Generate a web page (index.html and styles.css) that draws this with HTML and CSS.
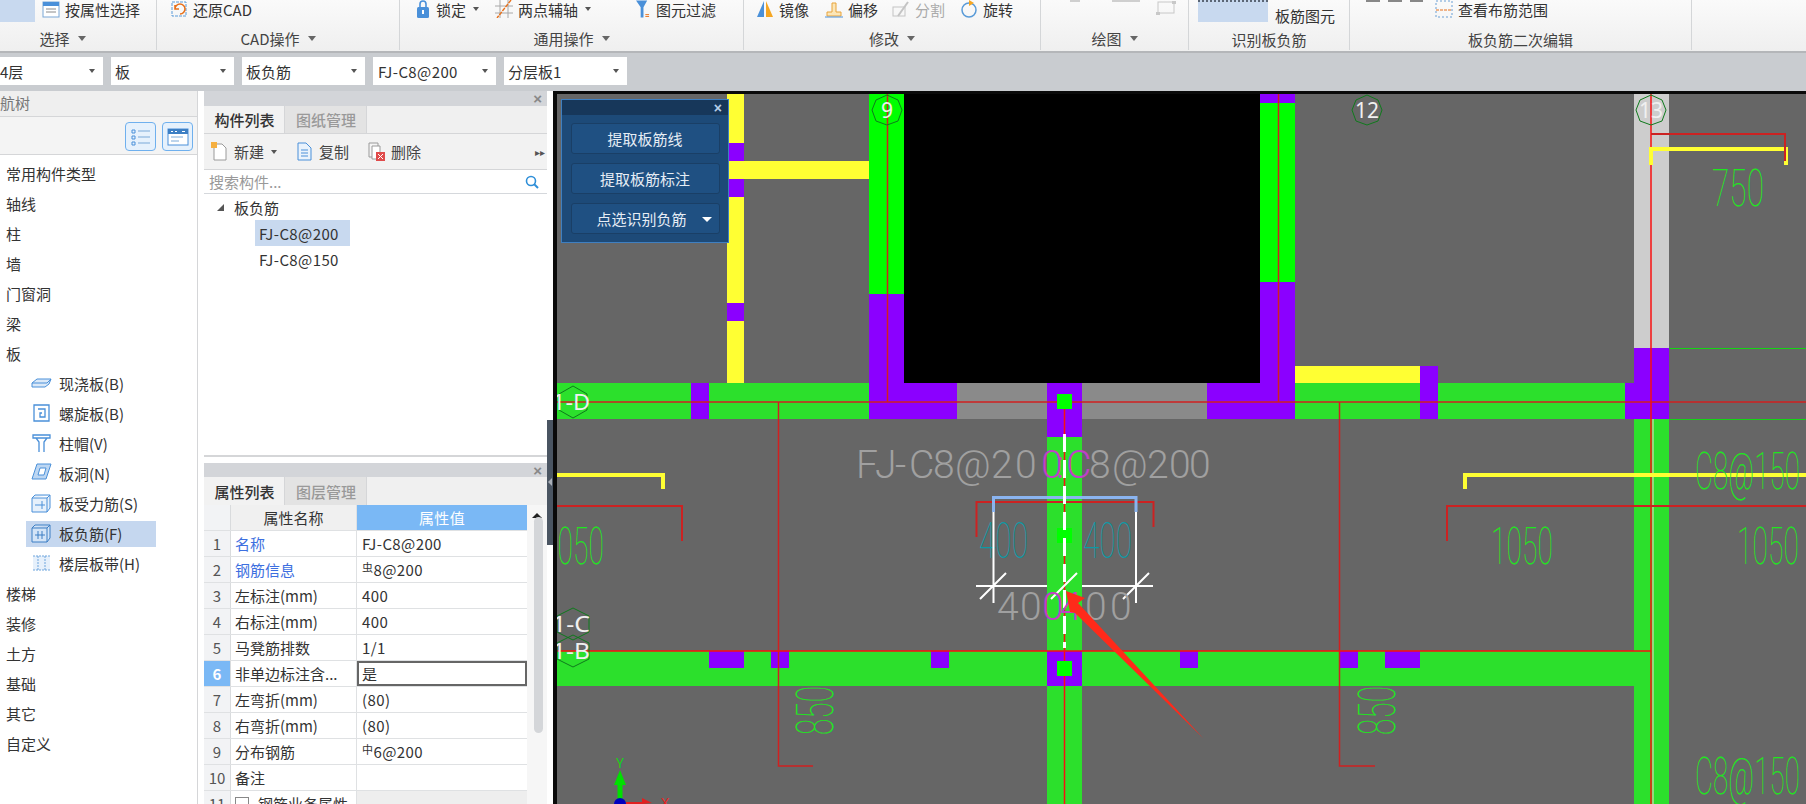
FILE: index.html
```html
<!DOCTYPE html>
<html lang="zh-CN">
<head>
<meta charset="utf-8">
<title>板负筋</title>
<link rel="stylesheet" href="styles.css">
</head>
<body>
<div class="app">
  <header class="ribbon">
    <section class="rg g1">
      <div class="rtop"><span class="hl"></span>
        <span class="ri"><svg class="ic" viewBox="0 0 18 18"><rect x="1" y="2" width="16" height="15" fill="#fff" stroke="#7ba7d6"/><rect x="1" y="2" width="16" height="4" fill="#4a90d9"/><path d="M4 9h10M4 12h10" stroke="#8a8a8a"/></svg>按属性选择</span>
      </div>
      <div class="rlabel">选择<i class="tri"></i></div>
    </section>
    <section class="rg g2">
      <div class="rtop">
        <span class="ri"><svg class="ic" viewBox="0 0 18 18"><rect x="2" y="2" width="14" height="14" fill="none" stroke="#5a9bd8" stroke-dasharray="3 1"/><path d="M5 9a5 5 0 1 1 5 5M5 5v4h4" fill="none" stroke="#e8701a" stroke-width="1.6"/></svg>还原CAD</span>
      </div>
      <div class="rlabel">CAD操作<i class="tri"></i></div>
    </section>
    <section class="rg g3">
      <div class="rtop">
        <span class="ri w79"><svg class="ic ic-n" viewBox="0 0 14 18"><path d="M4 8V4a3 3 0 0 1 6 0v4" fill="none" stroke="#4a90d9" stroke-width="1.6"/><rect x="1" y="7" width="12" height="11" rx="1.500" fill="#4a90d9"/><rect x="6" y="10" width="2" height="4" fill="#fff"/></svg>锁定<i class="tri tri-s"></i></span>
        <span class="ri w141"><svg class="ic" viewBox="0 0 18 18"><path d="M0 6h18M0 13h18M5 0v18M13 0v18" stroke="#a8a8a8"/><path d="M16 0L2 18" stroke="#e8701a" stroke-width="1.4" stroke-dasharray="4 1"/></svg>两点辅轴<i class="tri tri-s"></i></span>
        <span class="ri"><svg class="ic ic-n" viewBox="0 0 15 18"><path d="M0 0h12L8 7v11H5V7z" fill="#4a90d9"/><path d="M10 15h4M10 17h4" stroke="#e8701a"/></svg>图元过滤</span>
      </div>
      <div class="rlabel">通用操作<i class="tri"></i></div>
    </section>
    <section class="rg g4">
      <div class="rtop">
        <span class="ri w69"><svg class="ic" viewBox="0 0 18 18"><path d="M8 1v16H1z" fill="#4a90d9"/><path d="M10 1v16h7z" fill="#f5a623"/></svg>镜像</span>
        <span class="ri w65"><svg class="ic" viewBox="0 0 18 18"><path d="M2 16h14v-4H11V3H7v9H2z" fill="#fbe6b8" stroke="#e8a33a"/><path d="M0 17h18" stroke="#4a90d9"/></svg>偏移</span>
        <span class="ri w70 off"><svg class="ic ic-w" viewBox="0 0 22 18"><rect x="3" y="7" width="12" height="9" fill="none" stroke="#c4c4c4"/><path d="M8 16L18 2" stroke="#c4c4c4" stroke-width="2"/></svg>分割</span>
        <span class="ri"><svg class="ic" viewBox="0 0 18 18"><circle cx="9" cy="10" r="7" fill="none" stroke="#5a9bd8" stroke-width="1.5"/><path d="M9 0l5 3-5 3z" fill="#f5a623"/></svg>旋转</span>
      </div>
      <div class="rlabel">修改<i class="tri"></i></div>
    </section>
    <section class="rg g5">
      <div class="rtop"><span class="gbit b1"></span><span class="gbit b2"></span><svg class="ic rect" viewBox="0 0 20 14"><rect x="2" y="1" width="16" height="11" fill="none" stroke="#c8c8c8"/><path d="M0 11h4v3H0zM16 0h4v3h-4z" fill="#c8c8c8"/></svg></div>
      <div class="rlabel">绘图<i class="tri"></i></div>
    </section>
    <section class="rg g6">
      <div class="rtop"><span class="hl hl6"></span><span class="t2">板筋图元</span></div>
      <div class="rlabel lb2">识别板负筋</div>
    </section>
    <section class="rg g7">
      <div class="rtop"><span class="gbit b3"></span>
        <span class="ri"><svg class="ic" viewBox="0 0 18 18"><rect x="1" y="1" width="16" height="16" fill="none" stroke="#6b9fd4" stroke-dasharray="2 2"/><path d="M1 10h16" stroke="#e8701a" stroke-dasharray="3 1"/></svg>查看布筋范围</span>
      </div>
      <div class="rlabel lb2">板负筋二次编辑</div>
    </section>
  </header>

  <nav class="bar">
    <div class="dd d1"><span class="dd-t d1-t">4层</span><i class="tri tri-s"></i></div>
    <div class="dd"><span class="dd-t">板</span><i class="tri tri-s"></i></div>
    <div class="dd"><span class="dd-t">板负筋</span><i class="tri tri-s"></i></div>
    <div class="dd"><span class="dd-t ltn">FJ-C8@200</span><i class="tri tri-s"></i></div>
    <div class="dd"><span class="dd-t">分层板1</span><i class="tri tri-s"></i></div>
  </nav>

  <main class="main">
    <aside class="nav">
      <div class="nav-h"><span>导航树</span></div>
      <div class="nav-tools">
        <button class="tb"><svg viewBox="0 0 22 20" class="tb-i"><path d="M2 3h3v3H2zM2 9h3v3H2zM2 15h3v3H2z" fill="none" stroke="#4a90d9"/><path d="M8 4h12M8 10h12M8 16h12" stroke="#7aa9d8"/></svg></button>
        <button class="tb"><svg viewBox="0 0 22 20" class="tb-i"><rect x="1" y="2" width="20" height="16" fill="#fff" stroke="#4a90d9"/><rect x="1" y="2" width="20" height="5" fill="#3d7fc4"/><path d="M4 4.500h2M8 4.500h2M15 4.500h3" stroke="#fff"/><path d="M4 10h12M4 14h8" stroke="#7aa9d8"/></svg></button>
      </div>
      <ul class="tree">
        <li>常用构件类型</li>
        <li>轴线</li>
        <li>柱</li>
        <li>墙</li>
        <li>门窗洞</li>
        <li>梁</li>
        <li>板</li>
        <li class="sub"><svg class="si" viewBox="0 0 21 20"><path d="M1 10l5-4h14l-2 5-4 3H1z" fill="#dbe9f8" stroke="#4a90d9"/><path d="M1 10h15l4-4" fill="none" stroke="#4a90d9"/></svg>现浇板(B)</li>
        <li class="sub"><svg class="si" viewBox="0 0 21 20"><path d="M3 2h15v16H3zM7 6h7v8H9v-4h2" fill="none" stroke="#4a90d9" stroke-width="1.3"/></svg>螺旋板(B)</li>
        <li class="sub"><svg class="si" viewBox="0 0 21 20"><path d="M2 2h17v3H2zM5 5l3 4v10M16 5l-3 4v10" fill="none" stroke="#4a90d9" stroke-width="1.3"/></svg>柱帽(V)</li>
        <li class="sub"><svg class="si" viewBox="0 0 21 20"><path d="M6 1h14l-5 15H1z" fill="#bcd6f2" stroke="#4a90d9"/><path d="M9 5h6l-2 7H7z" fill="#fff" stroke="#4a90d9"/></svg>板洞(N)</li>
        <li class="sub"><svg class="si" viewBox="0 0 21 20"><path d="M1 5h15v14H1zM16 5l3-3v13l-3 4M1 5l3-3h15" fill="#e6f0fb" stroke="#4a90d9"/><path d="M4 12h10M11 8v8" stroke="#4a90d9"/></svg>板受力筋(S)</li>
        <li class="sub cur"><svg class="si" viewBox="0 0 21 20"><path d="M1 5h15v14H1zM16 5l3-3v13l-3 4M1 5l3-3h15" fill="#d3e4f7" stroke="#3d7fc4"/><path d="M4 12h10M7 8v8M11 8v8" stroke="#3d7fc4"/></svg>板负筋(F)</li>
        <li class="sub"><svg class="si" viewBox="0 0 21 20"><path d="M2 3h17v14H2z" fill="#e6f0fb"/><path d="M2 3h17M2 17h17M7 3v14M14 3v14" stroke="#6fa5dd" stroke-dasharray="2 1"/></svg>楼层板带(H)</li>
        <li>楼梯</li>
        <li>装修</li>
        <li>土方</li>
        <li>基础</li>
        <li>其它</li>
        <li>自定义</li>
      </ul>
    </aside>

    <div class="mid">
      <section class="panel p-list">
        <div class="ptitle"><span class="x">×</span></div>
        <div class="tabs"><span class="tab on">构件列表</span><span class="tab">图纸管理</span></div>
        <div class="ptools">
          <span class="pt w85"><svg class="pi" viewBox="0 0 17 19"><path d="M3 2h8l4 4v12H3z" fill="#fff" stroke="#9a9a9a"/><path d="M0 0h6v6H0z" fill="#f5b041"/></svg>新建<i class="tri tri-s"></i></span>
          <span class="pt w72"><svg class="pi" viewBox="0 0 17 19"><path d="M2 1h8l5 5v12H2z" fill="#eaf3fc" stroke="#4a90d9"/><path d="M5 8h7M5 11h7M5 14h7" stroke="#4a90d9"/></svg>复制</span>
          <span class="pt"><svg class="pi" viewBox="0 0 17 19"><path d="M1 1h9v14H1z" fill="#f5f5f5" stroke="#9a9a9a"/><path d="M4 4h8v13H4z" fill="#fff" stroke="#9a9a9a"/><rect x="8" y="10" width="9" height="9" fill="#e04b4b"/><path d="M10 12l5 5M15 12l-5 5" stroke="#fff"/></svg>删除</span>
          <span class="more">▸▸</span>
        </div>
        <div class="search"><span>搜索构件...</span><svg class="mag" viewBox="0 0 14 14"><circle cx="6" cy="6" r="4.5" fill="none" stroke="#2f8fd8" stroke-width="1.6"/><path d="M9 9l4 4" stroke="#2f8fd8" stroke-width="2"/></svg></div>
        <div class="lst">
          <div class="l0"><i class="corner"></i>板负筋</div>
          <div class="l1 sel">FJ-C8@200</div>
          <div class="l1">FJ-C8@150</div>
        </div>
      </section>
      <section class="panel p-prop">
        <div class="ptitle"><span class="x">×</span></div>
        <div class="tabs"><span class="tab on">属性列表</span><span class="tab">图层管理</span></div>
        <div class="pbody">
          <div class="grid">
            <div class="r hd"><span class="n"></span><span class="k">属性名称</span><span class="v">属性值</span></div>
            <div class="r"><span class="n">1</span><span class="k blue">名称</span><span class="v">FJ-C8@200</span></div>
            <div class="r"><span class="n">2</span><span class="k blue">钢筋信息</span><span class="v"><small>虫</small>8@200</span></div>
            <div class="r"><span class="n">3</span><span class="k">左标注(mm)</span><span class="v">400</span></div>
            <div class="r"><span class="n">4</span><span class="k">右标注(mm)</span><span class="v">400</span></div>
            <div class="r"><span class="n">5</span><span class="k">马凳筋排数</span><span class="v">1/1</span></div>
            <div class="r act"><span class="n">6</span><span class="k">非单边标注含...</span><span class="v">是</span></div>
            <div class="r"><span class="n">7</span><span class="k">左弯折(mm)</span><span class="v">(80)</span></div>
            <div class="r"><span class="n">8</span><span class="k">右弯折(mm)</span><span class="v">(80)</span></div>
            <div class="r"><span class="n">9</span><span class="k">分布钢筋</span><span class="v"><small>中</small>6@200</span></div>
            <div class="r"><span class="n">10</span><span class="k">备注</span><span class="v"></span></div>
            <div class="r r11"><span class="n">11</span><span class="k"><i class="chk"></i>钢筋业务属性</span><span class="v"></span></div>
          </div>
          <div class="sb"><i class="sb-up"></i><i class="sb-th"></i></div>
        </div>
      </section>
    </div>

    <div class="split"><i class="split-d"></i></div>

    <div class="canvas">
      <svg class="cad" viewBox="557 94 1249 710" width="1249" height="710">
        <!-- upper yellow wall -->
        <rect class="y" x="727" y="94" width="17" height="289"/>
        <rect class="p" x="727" y="143" width="17" height="18"/>
        <rect class="p" x="727" y="179" width="17" height="18"/>
        <rect class="p" x="727" y="303" width="17" height="18"/>
        <rect class="y" x="727" y="161" width="142" height="18"/>
        <!-- black block -->
        <rect class="k0" x="904" y="94" width="356" height="289"/>
        <!-- green walls -->
        <rect class="g0" x="869" y="94" width="35" height="200"/>
        <rect class="p" x="869" y="294" width="35" height="125"/>
        <rect class="p" x="1260" y="94" width="35" height="9"/>
        <rect class="g0" x="1260" y="103" width="35" height="179"/>
        <rect class="p" x="1260" y="282" width="35" height="137"/>
        <rect class="c0" x="1634" y="94" width="35" height="254"/>
        <!-- band D -->
        <rect class="g" x="557" y="383" width="312" height="36"/>
        <rect class="p" x="691" y="383" width="18" height="36"/>
        <rect class="p" x="869" y="383" width="88" height="36"/>
        <rect class="m" x="957" y="383" width="90" height="36"/>
        <rect class="m" x="1082" y="383" width="125" height="36"/>
        <rect class="p" x="1207" y="383" width="88" height="36"/>
        <rect class="y" x="1295" y="366" width="125" height="17"/>
        <rect class="g" x="1295" y="383" width="330" height="36"/>
        <rect class="p" x="1420" y="366" width="18" height="53"/>
        <rect class="p" x="1625" y="383" width="9" height="36"/>
        <rect class="p" x="1634" y="348" width="35" height="71"/>
        <!-- verticals -->
        <rect class="g" x="1634" y="419" width="35" height="385"/>
        <rect class="g" x="1047" y="437" width="35" height="367"/>
        <rect class="p" x="1047" y="383" width="35" height="54"/>
        <!-- band B -->
        <rect class="g" x="557" y="651" width="1077" height="35"/>
        <rect class="p" x="709" y="651" width="35" height="17"/>
        <rect class="p" x="771" y="651" width="18" height="17"/>
        <rect class="p" x="931" y="651" width="18" height="17"/>
        <rect class="p" x="1180" y="651" width="18" height="17"/>
        <rect class="p" x="1339" y="651" width="19" height="17"/>
        <rect class="p" x="1385" y="651" width="35" height="17"/>
        <rect class="p" x="1047" y="651" width="35" height="35"/>

        <!-- thin green -->
        <path class="lg" d="M1669 348.500H1806M1669 419.500H1806"/>
        <!-- red axes -->
        <path class="lr" d="M557 402H1806M887.500 94V402M1278.500 94V402M778.500 402V766H813M1339.500 402V766H1375"/>
        <path class="lr2" d="M557 651H1651M1064.500 402V804M1651 94V804"/>
        <path class="lw1" d="M1653 419V804"/>
        <!-- rebar brackets -->
        <path class="ly" d="M557 475H663V489M1465 489V475H1806M1651 165V149H1786V165"/>
        <path class="lr3" d="M557 506H682V541M1447 541V506H1806M1651 134H1785V161M976.500 537V502H1153.500V527"/>

        <!-- column markers -->
        <rect class="g0" x="1057" y="394" width="15" height="15"/>
        <rect class="g0" x="1057" y="661" width="15" height="15"/>
        <rect class="g0" x="1057" y="528" width="15" height="15"/>

        <!-- CAD text -->
        <text class="t-g" x="542" y="564" textLength="62" lengthAdjust="spacingAndGlyphs">1050</text>
        <text class="t-g" x="1491" y="564" textLength="62" lengthAdjust="spacingAndGlyphs">1050</text>
        <text class="t-g" x="1737" y="564" textLength="62" lengthAdjust="spacingAndGlyphs">1050</text>
        <text class="t-g" x="1712" y="206" textLength="52" lengthAdjust="spacingAndGlyphs">750</text>
        <text class="t-g" x="1695" y="489" textLength="105" lengthAdjust="spacingAndGlyphs">C8@150</text>
        <text class="t-g" x="1695" y="794" textLength="105" lengthAdjust="spacingAndGlyphs">C8@150</text>
        <text class="t-g" transform="translate(833 735) rotate(-90)" textLength="49" lengthAdjust="spacingAndGlyphs">850</text>
        <text class="t-g" transform="translate(1395 735) rotate(-90)" textLength="49" lengthAdjust="spacingAndGlyphs">850</text>
        <text class="t-c" x="979" y="558" textLength="49" lengthAdjust="spacingAndGlyphs">400</text>
        <text class="t-c" x="1083" y="558" textLength="49" lengthAdjust="spacingAndGlyphs">400</text>

        <!-- selected rebar -->
        <path class="lw" d="M993.500 512V603M1136 512V603M976 586H1047M1082 586H1153M980 599L1006 573M1051 599L1077 573M1123 599L1149 573"/>
        <path class="lb" d="M993.500 512V497.500H1136V512"/>
        <path class="ld" d="M1064.500 434V648"/>
        <text class="t-a" y="478" x="856 875 895 909 933 955 991 1015">FJ-C8@20<tspan class="mg" x="1041 1056 1066">0:C</tspan><tspan x="1089 1112 1147 1169 1189">8@200</tspan></text>
        <text class="t-a" y="620" x="997 1020">40<tspan class="mg" x="1042 1060">04</tspan><tspan x="1085 1110">00</tspan></text>

        <!-- arrow -->
        <polygon class="ar" points="1066,591 1085,598 1078,603 1203,738 1075,613 1070,612"/>

        <!-- axis bubbles -->
        <g class="bub">
          <polygon points="887,95 898,100 902,110 898,121 887,125 876,121 872,110 876,100"/>
          <polygon points="1367,95 1378,100 1382,110 1378,121 1367,125 1356,121 1352,110 1356,100"/>
          <polygon points="1651,95 1662,100 1666,110 1662,121 1651,125 1640,121 1636,110 1640,100"/>
          <polygon points="573,386 587,394 587,410 573,418 559,410 559,394"/>
          <polygon points="573,608 589,616 589,632 573,640 557,632 557,616"/>
          <polygon points="573,635 589,643 589,659 573,667 557,659 557,643"/>
        </g>
        <text class="t-b" x="887" y="118" text-anchor="middle">9</text>
        <text class="t-b" x="1367" y="118" text-anchor="middle">12</text>
        <text class="t-b" x="1651" y="118" text-anchor="middle">13</text>
        <text class="t-b" x="552" y="410" textLength="38" lengthAdjust="spacingAndGlyphs">1-D</text>
        <text class="t-b" x="552" y="632" textLength="38" lengthAdjust="spacingAndGlyphs">1-C</text>
        <text class="t-b" x="552" y="659" textLength="38" lengthAdjust="spacingAndGlyphs">1-B</text>

        <!-- UCS -->
        <path class="ux" d="M620 804V785"/>
        <polygon class="uy" points="620,770 626,785 614,785"/>
        <text class="t-y" x="620" y="768" text-anchor="middle">Y</text>
        <circle class="uz" cx="620" cy="804" r="6"/>
        <path class="ur" d="M626 803H642"/>
        <polygon class="urf" points="652,803 642,798 642,804"/>
        <text class="t-x" x="665" y="808" text-anchor="middle">X</text>
      </svg>
      <div class="float">
        <div class="float-h"><span>×</span></div>
        <button class="fb">提取板筋线</button>
        <button class="fb">提取板筋标注</button>
        <button class="fb fb-d">点选识别负筋<i class="fb-t"></i></button>
      </div>
    </div>
  </main>
</div>
</body>
</html>
```

FILE: styles.css
```css
* { box-sizing: border-box; }
html, body { margin: 0; height: 100%; background: #fff; overflow: hidden; }
body { font: 15px/1 "Noto Sans CJK SC", "Noto Sans", sans-serif; color: #333; }
ul { list-style: none; margin: 0; padding: 0; }
i { font-style: normal; display: inline-block; }
button { font: inherit; }

.app { width: 1806px; height: 804px; display: flex; flex-direction: column; overflow: hidden; }

/* ribbon */
.ribbon { height: 53px; flex: none; display: flex; background: linear-gradient(#fafafa, #efefef); border-bottom: 2px solid #b4b6b9; }
.rg { --pad: 0px; height: 50px; flex: none; border-right: 1px solid #d4d6d8; display: flex; flex-direction: column; padding-left: var(--pad); }
.g1 { --pad: 31px; width: 188px; margin-left: -31px; }
.g2 { --pad: 13px; width: 243px; }
.g3 { --pad: 16px; width: 344px; }
.g4 { --pad: 12px; width: 297px; }
.g5 { --pad: 29px; width: 148px; }
.g6 { --pad: 9px; width: 161px; }
.g7 { --pad: 16px; width: 342px; }
.rtop { height: 27px; display: flex; align-items: flex-start; flex: none; }
.ri { height: 18px; display: flex; align-items: center; white-space: nowrap; flex: none; }
.w79 { width: 79px; } .w141 { width: 141px; } .w69 { width: 69px; } .w65 { width: 65px; } .w70 { width: 70px; }
.off { color: #aaa; }
.ic { width: 18px; height: 18px; margin-right: 5px; flex: none; }
.ic-n { width: 14px; margin-right: 6px; }
.ic-w { width: 22px; margin-right: 3px; }
.rect { width: 20px; height: 14px; margin: 1px 0 0; }
.gbit { height: 2px; flex: none; background: #cfcfcf; }
.b1 { width: 10px; margin-right: 32px; }
.b2 { width: 28px; margin-right: 16px; }
.b3 { width: 57px; margin-right: 12px; background: repeating-linear-gradient(90deg, #888 0 14px, transparent 14px 22px); }
.hl { width: 35px; height: 22px; background: #c8d9ef; margin-right: 7px; flex: none; }
.hl6 { width: 70px; border-top: 2px dotted #5b6675; }
.t2 { margin-top: 8px; white-space: nowrap; }
.rlabel { height: 23px; display: flex; align-items: center; justify-content: center; color: #444; margin-left: calc(-1 * var(--pad)); }
.lb2 { padding-top: 2px; }
.tri { width: 0; height: 0; border: 4px solid transparent; border-top: 5px solid #666; border-bottom: 0; margin-left: 8px; }
.tri-s { border-width: 3px; border-top-width: 4px; border-bottom-width: 0; border-top-color: #555; margin-left: 7px; }

/* selector bar */
.bar { height: 38px; flex: none; display: flex; gap: 8px; padding-top: 4px; background: #c9ccd0; }
.dd { width: 123px; height: 28px; background: #fff; display: flex; align-items: center; justify-content: space-between; padding: 0 8px 0 4px; color: #333; }
.d1 { width: 103px; padding-left: 0; }
.d1-t { margin-left: 0; }
.ltn { letter-spacing: .4px; margin-left: 1px; }

/* main */
.main { flex: 1; min-height: 0; display: flex; }
.nav { width: 204px; flex: none; padding-right: 6px; background: #fff; }
.nav-h { height: 26px; padding-bottom: 3px; background: #efefef; border-bottom: 1px solid #d5d6d8; border-right: 1px solid #d5d6d8; overflow: hidden; display: flex; align-items: center; color: #777; }
.nav-h span { margin-left: -15px; white-space: nowrap; }
.nav-tools { height: 38px; background: #f4f4f4; border-bottom: 1px solid #d5d6d8; border-right: 1px solid #d5d6d8; display: flex; justify-content: flex-end; gap: 6px; padding: 5px 4px 0 0; }
.tb { width: 31px; height: 29px; padding: 0; border: 1px solid #6fb0ee; border-radius: 4px; background: #e6f1fc; display: flex; align-items: center; justify-content: center; }
.tb-i { width: 22px; height: 20px; }
.tree { height: 665px; padding-top: 6px; border-right: 1px solid #d5d6d8; display: flex; flex-direction: column; gap: 4px; }
.tree li { height: 26px; display: flex; align-items: center; padding: 0 0 2px 6px; color: #333; white-space: nowrap; }
.tree .sub { margin-left: 26px; width: 130px; padding-left: 5px; }
.tree .cur { background: #c5d7ef; }
.si { width: 21px; height: 20px; margin-right: 7px; flex: none; }

.mid { width: 343px; flex: none; display: flex; flex-direction: column; background: #fff; }
.panel { display: flex; flex-direction: column; background: #fff; }
.p-list { height: 366px; border-bottom: 2px solid #d5d6d8; }
.p-prop { margin-top: 6px; height: 341px; overflow: hidden; }
.ptitle { height: 15px; flex: none; background: #d3d5d9; display: flex; justify-content: flex-end; align-items: center; padding-right: 5px; }
.x { color: #888; font-size: 15px; font-family: "Liberation Sans", sans-serif; font-weight: 700; }
.p-prop .ptitle { height: 14px; }
.tabs { height: 27px; flex: none; display: flex; background: #f0f0f0; }
.p-prop .tabs { height: 28px; }
.tab { width: 82px; display: flex; align-items: center; justify-content: center; background: #e3e3e3; color: #999; border-right: 1px solid #d5d6d8; font-weight: 500; padding-left: 1px; }
.tab.on { background: #f2f2f2; color: #333; width: 81px; }
.ptools { height: 37px; flex: none; display: flex; align-items: center; padding-left: 7px; background: #f2f2f2; border-top: 1px solid #d5d6d8; border-bottom: 1px solid #d5d6d8; position: relative; }
.pt { display: flex; align-items: center; color: #444; flex: none; white-space: nowrap; }
.w85 { width: 85px; } .w72 { width: 72px; }
.pi { width: 17px; height: 19px; margin-right: 6px; }
.more { margin-left: auto; padding-right: 2px; font-size: 10px; color: #555; }
.search { height: 24px; flex: none; display: flex; align-items: center; justify-content: space-between; padding: 0 8px 0 5px; border-bottom: 1px solid #d5d8dc; color: #999; }
.mag { width: 14px; height: 14px; }
.lst { flex: 1; position: relative; }
.l0 { height: 26px; padding-left: 30px; display: flex; align-items: center; position: relative; }
.corner { position: absolute; left: 13px; top: 10px; width: 0; height: 0; border-style: solid; border-width: 0 0 7px 7px; border-color: transparent transparent #555 transparent; }
.l1 { width: 95px; height: 26px; margin-left: 51px; padding-left: 4px; display: flex; align-items: center; white-space: nowrap; letter-spacing: .4px; }
.sel { background: #c8d9ef; }

.pbody { display: flex; flex: 1; min-height: 0; }
.grid { width: 323px; flex: none; }
.r { height: 26px; display: flex; border-bottom: 1px solid #dfe1e3; }
.n { width: 27px; flex: none; background: #f2f3f5; border-right: 1px solid #d9dbdd; display: flex; align-items: center; justify-content: center; color: #555; }
.k { width: 126px; flex: none; border-right: 1px solid #dfe1e3; display: flex; align-items: center; padding-left: 4px; white-space: nowrap; }
.v { flex: 1; display: flex; align-items: center; padding-left: 5px; white-space: nowrap; letter-spacing: .4px; }
.v small { font-size: 11px; margin-bottom: 5px; }
.blue { color: #3d6fe0; }
.hd .n { background: #f2f3f5; }
.hd .k { background: #f0f0f0; justify-content: center; padding: 0; }
.hd .v { background: #7ab8f5; color: #fff; justify-content: center; padding: 0; }
.act .n { background: #7ab8f5; color: #fff; font-weight: 700; }
.act .v { border: 2px solid #666; padding-left: 3px; }
.r11 .v { background: #eeeeee; }
.chk { width: 14px; height: 14px; border: 1px solid #888; margin-right: 9px; background: #fff; flex: none; }
.sb { width: 20px; flex: none; background: #f6f6f6; position: relative; }
.sb-up { position: absolute; left: 5px; top: 8px; width: 0; height: 0; border: 5px solid transparent; border-bottom: 5px solid #222; border-top: 0; }
.sb-th { position: absolute; left: 7px; top: 12px; width: 9px; height: 216px; margin-top: 0; border-radius: 5px; background: #d4d6d9; }

.split { width: 6px; flex: none; background: #fff; padding-top: 329px; }
.split-d { display: block; height: 125px; background: #4a5562; position: relative; }
.split-d::after { content: ""; position: absolute; left: 1px; top: 58px; width: 0; height: 0; border: 4px solid transparent; border-right: 4px solid #aab0b8; border-left: 0; }

.canvas { width: 1253px; flex: none; position: relative; background: #666; border-left: 4px solid #0a0a0a; border-top: 3px solid #0a0a0a; overflow: hidden; }
.cad { display: block; }

.y { fill: #ffff33; }
.p { fill: #8b00ff; }
.g { fill: #2ce02c; }
.g0 { fill: #00ff00; }
.m { fill: #8a8a8a; }
.c0 { fill: #cdcdcd; }
.k0 { fill: #000; }
.lg { stroke: #14d414; fill: none; }
.lr { stroke: #d02020; stroke-width: 1.5; fill: none; }
.lr2 { stroke: #f81010; stroke-width: 1.5; fill: none; }
.lw1 { stroke: #ffd0d0; fill: none; }
.ly { stroke: #ffff33; stroke-width: 4; fill: none; }
.lr3 { stroke: #cc2222; stroke-width: 2; fill: none; }
.lw { stroke: #fff; stroke-width: 2; fill: none; }
.lb { stroke: #8ab4f0; stroke-width: 3; fill: none; }
.ld { stroke: #fff; stroke-width: 3; stroke-dasharray: 18 8; fill: none; }
.ar { fill: #ff2a1a; }
.bub polygon { fill: none; stroke: #0f7a1c; }
.t-g, .t-a, .t-c { font-family: "Roboto", "Liberation Sans", sans-serif; font-weight: 100; }
.t-g { font-size: 52px; fill: #1ee81e; }
.t-a { font-size: 39px; fill: #a0a0a0; font-weight: 300; }
.mg { fill: #c040c8; }
.t-c { font-size: 50px; fill: #0d9aa6; }
.t-b { font-family: "Noto Sans", sans-serif; font-size: 21px; fill: #f0f0f0; }
.t-y { font-family: "Noto Sans", sans-serif; font-size: 14px; fill: #14d414; }
.t-x { font-family: "Noto Sans", sans-serif; font-size: 14px; fill: #ee2222; }
.ux { stroke: #00e000; stroke-width: 5; }
.uy { fill: #00e000; }
.uz { fill: #0000c0; }
.ur { stroke: #e02020; stroke-width: 2; }
.urf { fill: #e02020; }

.float { position: absolute; left: 4px; top: 5px; width: 168px; height: 144px; background: #1d4a78; border: 1px solid #3f7fc0; display: flex; flex-direction: column; align-items: center; gap: 9px; color: #e6edf5; }
.float-h { width: 100%; height: 15px; flex: none; background: #17375a; display: flex; justify-content: flex-end; align-items: center; padding-right: 6px; font-family: "Liberation Sans", sans-serif; font-weight: 700; font-size: 14px; color: #b8cfe8; margin-bottom: -1px; }
.fb { width: 149px; height: 31px; flex: none; background: #1f5082; border: 1px solid #1a3f66; border-radius: 3px; color: #e6edf5; padding: 0; display: flex; align-items: center; justify-content: center; }
.fb-d { padding-right: 7px; position: relative; }
.fb-t { position: absolute; right: 7px; top: 13px; width: 0; height: 0; border: 5px solid transparent; border-top: 5px solid #fff; border-bottom: 0; }
```
